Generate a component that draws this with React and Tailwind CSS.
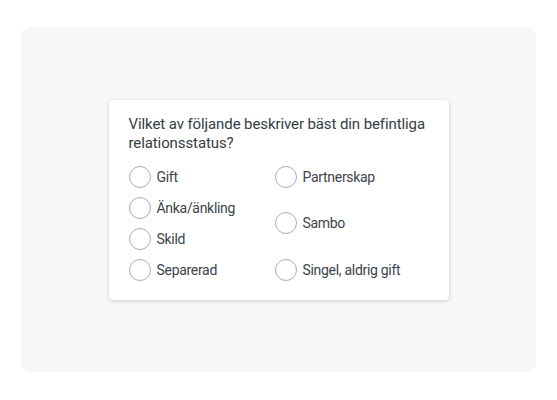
import React from 'react'

const left = ['Gift', 'Änka/änkling', 'Skild', 'Separerad']
const right = ['Partnerskap', 'Sambo', 'Singel, aldrig gift']

function Option({ label }) {
  return (
    <label className="flex items-center gap-[6px] cursor-pointer">
      <span className="w-[22px] h-[22px] rounded-full border border-[#a9aeb4] bg-white shrink-0" />
      <span className="text-[14px] leading-[20px] tracking-[-0.3px] text-[#3d4349]">{label}</span>
    </label>
  )
}

export default function App(){
  return (
    <div className="w-[557px] h-[400px] bg-white pt-[27px] pl-[21px]" style={{ fontFamily: 'Roboto, "Noto Sans", sans-serif' }}>
      <div className="w-[515px] h-[345px] bg-[#f7f7f7] rounded-[10px] flex items-center justify-center">
        <div className="w-[340px] bg-white rounded-[4px] shadow-[0_1px_4px_rgba(0,0,0,0.18)] pt-[15px] pb-[19px] pl-[20px] pr-[12px]">
          <h2 className="text-[15px] leading-[19px] tracking-[-0.1px] text-[#363c43] mb-[13px]">
            Vilket av följande beskriver bäst din befintliga relationsstatus?
          </h2>
          <div className="flex">
            <div className="w-[146px] flex flex-col gap-[9px]">
              {left.map(l => <Option key={l} label={l} />)}
            </div>
            <div className="flex flex-col justify-between">
              {right.map(l => <Option key={l} label={l} />)}
            </div>
          </div>
        </div>
      </div>
    </div>
  )
}
